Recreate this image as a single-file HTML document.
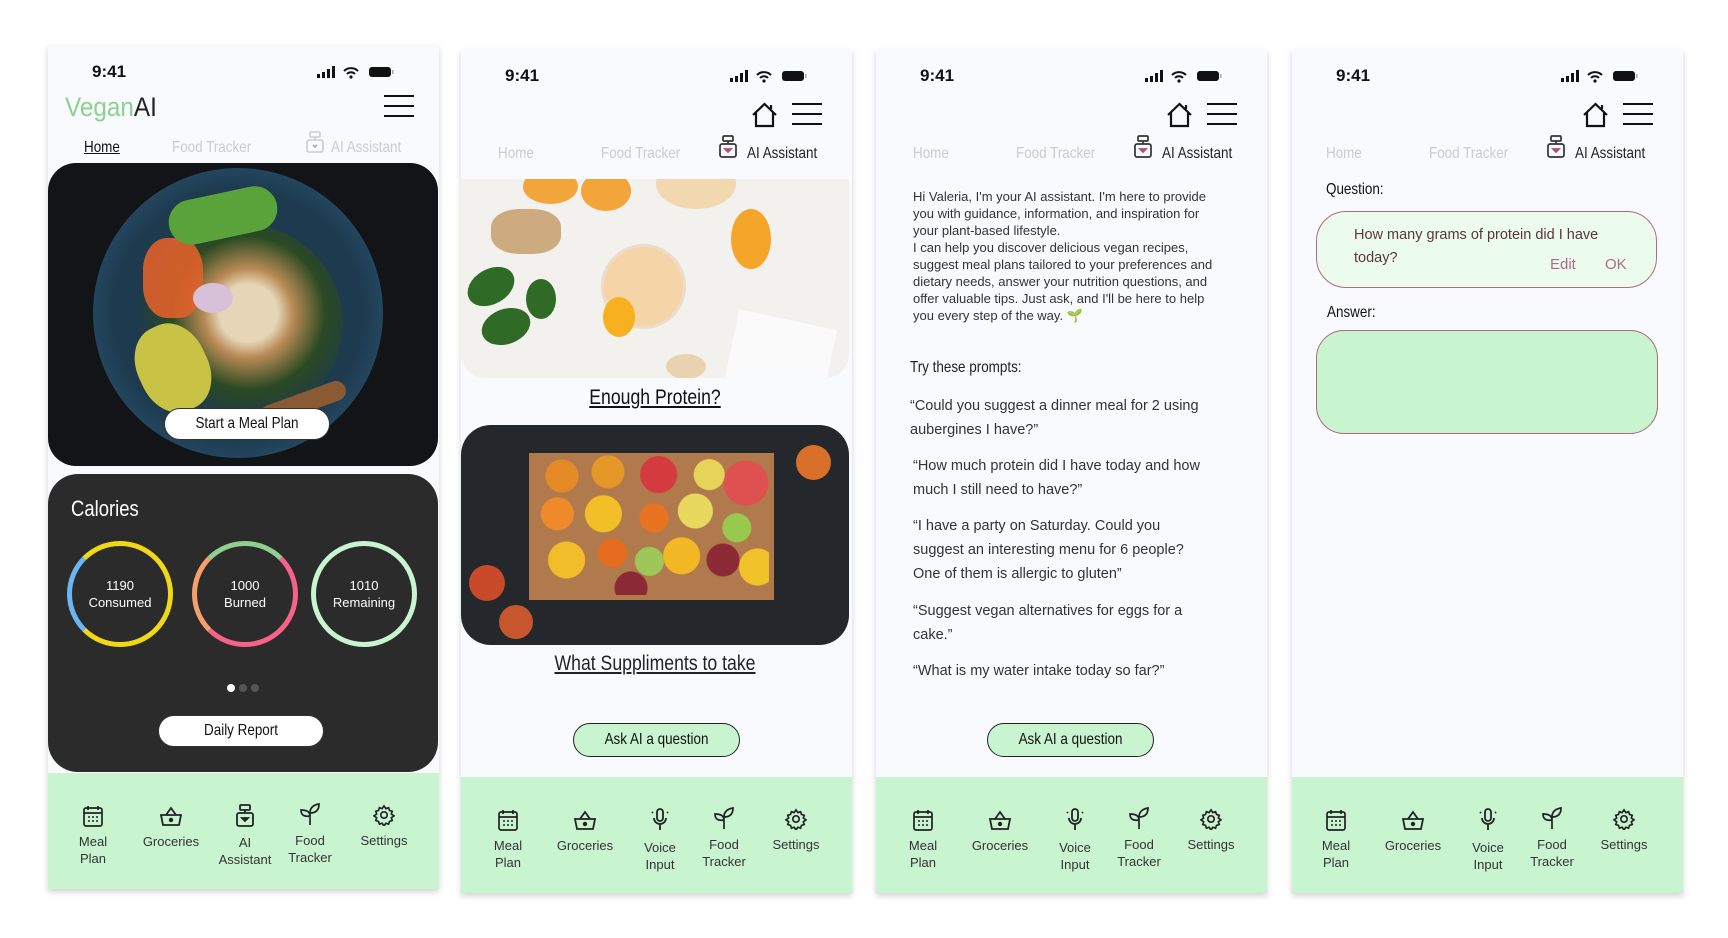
<!DOCTYPE html>
<html><head><meta charset="utf-8">
<style>
*{box-sizing:border-box;margin:0;padding:0}
body{width:1728px;height:938px;background:#fff;position:relative;overflow:hidden;font-family:"Liberation Sans",sans-serif;color:#222}
.ph{position:absolute;width:391px;height:844px;background:#f9fafe;box-shadow:0 3px 6px rgba(0,0,0,.18);overflow:hidden}
.n{display:inline-block;transform:scaleX(.84);transform-origin:left center;white-space:nowrap}
.nc{transform:scaleX(.84);transform-origin:center center;white-space:nowrap}
.abs{position:absolute}
.time{position:absolute;left:44px;top:17px;font-size:17px;font-weight:bold;color:#111}
.stat{position:absolute;left:269px;top:21px}
.tab{position:absolute;top:94px;font-size:16px;color:#ccc;white-space:nowrap}
.nav{position:absolute;left:0;top:728px;width:391px;height:116px;background:#c9f4d0}
.ni{position:absolute;text-align:center;font-size:13px;line-height:17px;color:#333;width:80px;margin-left:-40px}
.ni svg{display:block;margin:0 auto 6px}
.btn{position:absolute;border-radius:18px;text-align:center;font-size:16px;color:#111}
.circ{position:absolute;width:106px;height:106px;border-radius:50%;color:#fff;text-align:center;font-size:13px;line-height:17px;padding-top:31px}
.p3{position:absolute;left:37px;font-size:14.5px;line-height:24px;color:#333;width:290px}
</style></head><body>

<!-- ============ PHONE 1 ============ -->
<div class="ph" style="left:48px;top:45px">
  <div class="time">9:41</div>
  <svg class="stat" width="78" height="14" viewBox="0 0 78 14"><rect x="0" y="8" width="3" height="4" fill="#111"/><rect x="5" y="6" width="3" height="6" fill="#111"/><rect x="10" y="3" width="3" height="9" fill="#111"/><rect x="15" y="0" width="3" height="12" fill="#111"/><path d="M27 5a10 10 0 0 1 14 0M30 8a5.5 5.5 0 0 1 8 0" stroke="#111" stroke-width="2" fill="none"/><circle cx="34" cy="11" r="1.6" fill="#111"/><rect x="52" y="1" width="22" height="10" rx="3" fill="#111"/><rect x="75" y="4" width="1.5" height="4" fill="#aaa"/></svg>
  <div class="abs" style="left:17px;top:47px;font-size:27px;color:#8dd08f"><span class="n" style="transform:scaleX(.9)">Vegan<span style="color:#222">AI</span></span></div>
  <svg class="abs" style="left:336px;top:49px" width="30" height="24"><path d="M0 2h30M0 12h30M0 22h30" stroke="#111" stroke-width="2"/></svg>
  <div class="tab" style="left:36px;color:#111"><span class="n" style="text-decoration:underline">Home</span></div>
  <div class="tab" style="left:124px"><span class="n">Food Tracker</span></div>
  <svg class="abs" style="left:258px;top:86px" width="18" height="22" viewBox="0 0 18 22" fill="none" stroke="#ccc" stroke-width="1.6"><rect x="4" y="1" width="10" height="5" rx="1"/><rect x="1" y="9" width="16" height="12" rx="2"/><path d="M9 6v3"/><path d="M7 14l2 2 2-2" stroke="#aaa"/></svg>
  <div class="tab" style="left:283px"><span class="n">AI Assistant</span></div>

  <div class="abs" style="left:0;top:118px;width:390px;height:303px;border-radius:28px;background:#121417;overflow:hidden">
    <div class="abs" style="left:45px;top:5px;width:290px;height:290px;border-radius:50%;background:radial-gradient(circle,#1d3a4e 60%,#2d5a78 88%,#173042 100%)"></div>
    <div class="abs" style="left:85px;top:60px;width:210px;height:200px;border-radius:50%;background:radial-gradient(circle at 55% 45%,#e6d6b8 0 18%,#b88a55 28%,#2b4a22 48%,transparent 70%)"></div>
    <div class="abs" style="left:95px;top:75px;width:60px;height:80px;border-radius:40%;background:#e0602a;opacity:.9"></div>
    <div class="abs" style="left:120px;top:30px;width:110px;height:45px;border-radius:30px;background:#5aa33a;transform:rotate(-12deg)"></div>
    <div class="abs" style="left:90px;top:160px;width:70px;height:90px;border-radius:45%;background:#c8c245;transform:rotate(-25deg)"></div>
    <div class="abs" style="left:145px;top:120px;width:40px;height:30px;border-radius:50%;background:#d7c1d8"></div>
    <div class="abs" style="left:210px;top:230px;width:90px;height:20px;border-radius:10px;background:#8a5a35;transform:rotate(-20deg)"></div>
    <div class="btn" style="left:116px;top:245px;width:166px;height:32px;background:#fff;border:1px solid #333;line-height:30px"><div class="nc">Start a Meal Plan</div></div>
  </div>

  <div class="abs" style="left:0;top:429px;width:390px;height:298px;border-radius:30px;background:#2b2b2b">
    <div class="abs" style="left:23px;top:22px;font-size:22px;color:#fff"><span class="n">Calories</span></div>
    <div class="circ" style="left:19px;top:67px;border:5px solid #f0d816;border-left-color:#6bb6f2;border-top-color:#f0d816">1190<br>Consumed</div>
    <div class="circ" style="left:144px;top:67px;border:5px solid #f76288;border-left-color:#f5a06a;border-top-color:#90cf90">1000<br>Burned</div>
    <div class="circ" style="left:263px;top:67px;border:5px solid #c9f4d0">1010<br>Remaining</div>
    <div class="abs" style="left:179px;top:210px;width:8px;height:8px;border-radius:50%;background:#fff"></div>
    <div class="abs" style="left:191px;top:210px;width:8px;height:8px;border-radius:50%;background:#555"></div>
    <div class="abs" style="left:203px;top:210px;width:8px;height:8px;border-radius:50%;background:#555"></div>
    <div class="btn" style="left:110px;top:241px;width:166px;height:32px;background:#fff;border:1px solid #333;line-height:30px"><div class="nc">Daily Report</div></div>
  </div>

  <div class="nav">
    <div class="ni" style="left:45px;top:32px"><svg width="20" height="22" viewBox="0 0 20 22" fill="none" stroke="#222" stroke-width="1.7"><rect x="1" y="3" width="18" height="18" rx="2"/><path d="M1 8h18M5 1v4M15 1v4"/><path d="M5 12h2M9 12h2M13 12h2M5 16h2M9 16h2M13 16h2" stroke-width="1.5"/></svg>Meal<br>Plan</div>
    <div class="ni" style="left:123px;top:32px"><svg width="24" height="22" viewBox="0 0 24 22" fill="none" stroke="#222" stroke-width="1.8"><path d="M2 10h20l-2 10H4z"/><path d="M7 10l5-7 5 7"/><circle cx="12" cy="15" r="1.3" fill="#222"/></svg>Groceries</div>
    <div class="ni" style="left:197px;top:31px"><svg width="18" height="24" viewBox="0 0 18 24" fill="none" stroke="#222" stroke-width="1.8"><rect x="4" y="1" width="10" height="5" rx="1"/><rect x="1" y="9" width="16" height="13" rx="2"/><path d="M9 6v3"/><path d="M6 14h6l-3 3z" fill="#222"/></svg>AI<br>Assistant</div>
    <div class="ni" style="left:262px;top:29px"><svg width="24" height="24" viewBox="0 0 24 24" fill="none" stroke="#222" stroke-width="1.7"><path d="M12 23V11M12 11C12 6 15 3 21 2c0 6-3 9-9 9zM12 14C12 10 9 8 3 8c0 5 3 7 9 6z"/></svg>Food<br>Tracker</div>
    <div class="ni" style="left:336px;top:31px"><svg width="22" height="22" viewBox="0 0 24 24" fill="none" stroke="#222" stroke-width="1.8"><circle cx="12" cy="12" r="3.5"/><path d="M12 2l2 3 3-1 1 3 3 1-1 3 3 2-3 2 1 3-3 1-1 3-3-1-2 3-2-3-3 1-1-3-3-1 1-3-3-2 3-2-1-3 3-1 1-3 3 1z"/></svg>Settings</div>
  </div>
</div>

<!-- ============ PHONE 2 ============ -->
<div class="ph" style="left:461px;top:49px">
  <div class="time">9:41</div>
  <svg class="stat" width="78" height="14" viewBox="0 0 78 14"><rect x="0" y="8" width="3" height="4" fill="#111"/><rect x="5" y="6" width="3" height="6" fill="#111"/><rect x="10" y="3" width="3" height="9" fill="#111"/><rect x="15" y="0" width="3" height="12" fill="#111"/><path d="M27 5a10 10 0 0 1 14 0M30 8a5.5 5.5 0 0 1 8 0" stroke="#111" stroke-width="2" fill="none"/><circle cx="34" cy="11" r="1.6" fill="#111"/><rect x="52" y="1" width="22" height="10" rx="3" fill="#111"/><rect x="75" y="4" width="1.5" height="4" fill="#aaa"/></svg>
  <svg class="abs" style="left:290px;top:53px" width="27" height="26" viewBox="0 0 27 26" fill="none" stroke="#111" stroke-width="2.2"><path d="M2 13L13.5 2 25 13M5 10v14h17V10M20 7V3"/></svg>
  <svg class="abs" style="left:331px;top:53px" width="30" height="24"><path d="M0 2h30M0 12h30M0 22h30" stroke="#111" stroke-width="2"/></svg>
  <div class="tab" style="left:37px;top:96px"><span class="n">Home</span></div>
  <div class="tab" style="left:140px;top:96px"><span class="n">Food Tracker</span></div>
  <svg class="abs" style="left:258px;top:86px" width="18" height="24" viewBox="0 0 18 24" fill="none" stroke="#333" stroke-width="1.7"><rect x="4" y="1" width="10" height="5" rx="1"/><rect x="1" y="9" width="16" height="13" rx="2"/><path d="M9 6v3"/><path d="M6 14h6l-3 3z" fill="#b05070" stroke="#b05070"/></svg>
  <div class="tab" style="left:286px;top:96px;color:#222"><span class="n">AI Assistant</span></div>

  <div class="abs" style="left:0;top:130px;width:388px;height:199px;border-radius:0 0 24px 24px;background:#f3f1ee;overflow:hidden">
    <div class="abs" style="left:62px;top:-10px;width:55px;height:35px;border-radius:50%;background:#f2a53a"></div>
    <div class="abs" style="left:120px;top:-8px;width:50px;height:40px;border-radius:50%;background:#f3a43a"></div>
    <div class="abs" style="left:195px;top:-20px;width:80px;height:50px;border-radius:50%;background:#f1d8b0"></div>
    <div class="abs" style="left:140px;top:65px;width:85px;height:85px;border-radius:50%;background:#f5d4a8;border:3px solid #ecdcc9"></div>
    <div class="abs" style="left:142px;top:118px;width:32px;height:40px;border-radius:50%;background:#f6b020"></div>
    <div class="abs" style="left:270px;top:30px;width:40px;height:60px;border-radius:50%;background:#f5a52a"></div>
    <div class="abs" style="left:30px;top:30px;width:70px;height:45px;border-radius:40%;background:#cdaa80"></div>
    <div class="abs" style="left:5px;top:90px;width:50px;height:35px;border-radius:50%;background:#2f6a26;transform:rotate(-30deg)"></div>
    <div class="abs" style="left:20px;top:130px;width:50px;height:35px;border-radius:50%;background:#2f6a26;transform:rotate(-20deg)"></div>
    <div class="abs" style="left:65px;top:100px;width:30px;height:40px;border-radius:50%;background:#2f6a26"></div>
    <div class="abs" style="left:270px;top:140px;width:100px;height:70px;background:#fafafa;transform:rotate(12deg)"></div>
    <div class="abs" style="left:205px;top:175px;width:40px;height:25px;border-radius:50%;background:#e8d2b0"></div>
  </div>
  <div class="abs" style="left:0;top:337px;width:388px;text-align:center;font-size:21px;color:#111"><div class="nc" style="text-decoration:underline">Enough Protein?</div></div>

  <div class="abs" style="left:0;top:376px;width:388px;height:220px;border-radius:30px;background:#24272b;overflow:hidden">
    <div class="abs" style="left:68px;top:28px;width:245px;height:147px;background:#b07a4c"></div>
    <div class="abs" style="left:78px;top:30px;width:230px;height:140px;background:
      radial-gradient(circle at 10% 15%,#e48a26 0 16px,transparent 17px),
      radial-gradient(circle at 30% 12%,#e59828 0 16px,transparent 17px),
      radial-gradient(circle at 52% 14%,#d53a3e 0 18px,transparent 19px),
      radial-gradient(circle at 74% 14%,#e6d35a 0 15px,transparent 16px),
      radial-gradient(circle at 90% 20%,#df5050 0 22px,transparent 23px),
      radial-gradient(circle at 8% 42%,#ef8a2a 0 16px,transparent 17px),
      radial-gradient(circle at 28% 42%,#f2bf28 0 18px,transparent 19px),
      radial-gradient(circle at 50% 45%,#e87422 0 14px,transparent 15px),
      radial-gradient(circle at 68% 40%,#e9d85e 0 17px,transparent 18px),
      radial-gradient(circle at 86% 52%,#98c94e 0 14px,transparent 15px),
      radial-gradient(circle at 12% 75%,#f2bd2a 0 18px,transparent 19px),
      radial-gradient(circle at 32% 70%,#e66d20 0 14px,transparent 15px),
      radial-gradient(circle at 48% 76%,#9fc658 0 14px,transparent 15px),
      radial-gradient(circle at 62% 72%,#f2b826 0 18px,transparent 19px),
      radial-gradient(circle at 80% 75%,#8b2a35 0 16px,transparent 17px),
      radial-gradient(circle at 95% 80%,#f2c22a 0 18px,transparent 19px),
      radial-gradient(circle at 40% 95%,#8b2a35 0 16px,transparent 17px)"></div>
    <div class="abs" style="left:8px;top:140px;width:36px;height:36px;border-radius:50%;background:#c84a2a"></div>
    <div class="abs" style="left:38px;top:180px;width:34px;height:34px;border-radius:50%;background:#c8562c"></div>
    <div class="abs" style="left:335px;top:20px;width:35px;height:35px;border-radius:50%;background:#d8702a"></div>
  </div>
  <div class="abs" style="left:0;top:603px;width:388px;text-align:center;font-size:21px;color:#222"><div class="nc" style="text-decoration:underline">What Suppliments to take</div></div>
  <div class="btn" style="left:112px;top:674px;width:167px;height:34px;background:#c9f4d0;border:1.5px solid #222;line-height:31px"><div class="nc">Ask AI a question</div></div>

  <div class="nav">
    <div class="ni" style="left:47px;top:32px"><svg width="20" height="22" viewBox="0 0 20 22" fill="none" stroke="#222" stroke-width="1.7"><rect x="1" y="3" width="18" height="18" rx="2"/><path d="M1 8h18M5 1v4M15 1v4"/><path d="M5 12h2M9 12h2M13 12h2M5 16h2M9 16h2M13 16h2" stroke-width="1.5"/></svg>Meal<br>Plan</div>
    <div class="ni" style="left:124px;top:32px"><svg width="24" height="22" viewBox="0 0 24 22" fill="none" stroke="#222" stroke-width="1.8"><path d="M2 10h20l-2 10H4z"/><path d="M7 10l5-7 5 7"/><circle cx="12" cy="15" r="1.3" fill="#222"/></svg>Groceries</div>
    <div class="ni" style="left:199px;top:30px"><svg width="22" height="26" viewBox="0 0 22 26" fill="none" stroke="#222" stroke-width="1.8"><rect x="8" y="2" width="6" height="12" rx="3"/><path d="M5 11a6 6 0 0 0 12 0M11 17v6M3 5l1 1M19 5l-1 1"/></svg>Voice<br>Input</div>
    <div class="ni" style="left:263px;top:29px"><svg width="24" height="24" viewBox="0 0 24 24" fill="none" stroke="#222" stroke-width="1.7"><path d="M12 23V11M12 11C12 6 15 3 21 2c0 6-3 9-9 9zM12 14C12 10 9 8 3 8c0 5 3 7 9 6z"/></svg>Food<br>Tracker</div>
    <div class="ni" style="left:335px;top:31px"><svg width="22" height="22" viewBox="0 0 24 24" fill="none" stroke="#222" stroke-width="1.8"><circle cx="12" cy="12" r="3.5"/><path d="M12 2l2 3 3-1 1 3 3 1-1 3 3 2-3 2 1 3-3 1-1 3-3-1-2 3-2-3-3 1-1-3-3-1 1-3-3-2 3-2-1-3 3-1 1-3 3 1z"/></svg>Settings</div>
  </div>
</div>

<!-- ============ PHONE 3 ============ -->
<div class="ph" style="left:876px;top:49px">
  <div class="time">9:41</div>
  <svg class="stat" width="78" height="14" viewBox="0 0 78 14"><rect x="0" y="8" width="3" height="4" fill="#111"/><rect x="5" y="6" width="3" height="6" fill="#111"/><rect x="10" y="3" width="3" height="9" fill="#111"/><rect x="15" y="0" width="3" height="12" fill="#111"/><path d="M27 5a10 10 0 0 1 14 0M30 8a5.5 5.5 0 0 1 8 0" stroke="#111" stroke-width="2" fill="none"/><circle cx="34" cy="11" r="1.6" fill="#111"/><rect x="52" y="1" width="22" height="10" rx="3" fill="#111"/><rect x="75" y="4" width="1.5" height="4" fill="#aaa"/></svg>
  <svg class="abs" style="left:290px;top:53px" width="27" height="26" viewBox="0 0 27 26" fill="none" stroke="#111" stroke-width="2.2"><path d="M2 13L13.5 2 25 13M5 10v14h17V10M20 7V3"/></svg>
  <svg class="abs" style="left:331px;top:53px" width="30" height="24"><path d="M0 2h30M0 12h30M0 22h30" stroke="#111" stroke-width="2"/></svg>
  <div class="tab" style="left:37px;top:96px"><span class="n">Home</span></div>
  <div class="tab" style="left:140px;top:96px"><span class="n">Food Tracker</span></div>
  <svg class="abs" style="left:258px;top:86px" width="18" height="24" viewBox="0 0 18 24" fill="none" stroke="#333" stroke-width="1.7"><rect x="4" y="1" width="10" height="5" rx="1"/><rect x="1" y="9" width="16" height="13" rx="2"/><path d="M9 6v3"/><path d="M6 14h6l-3 3z" fill="#b05070" stroke="#b05070"/></svg>
  <div class="tab" style="left:286px;top:96px;color:#222"><span class="n">AI Assistant</span></div>

  <div class="abs" style="left:37px;top:139px;width:300px;font-size:13px;line-height:17px;color:#333">Hi Valeria, I'm your AI assistant. I'm here to provide you with guidance, information, and inspiration for your plant-based lifestyle.<br>I can help you discover delicious vegan recipes, suggest meal plans tailored to your preferences and dietary needs, answer your nutrition questions, and offer valuable tips. Just ask, and I'll be here to help you every step of the way. <span style="color:#5cb85c">🌱</span></div>
  <div class="abs" style="left:34px;top:310px;font-size:16px;color:#222"><span class="n">Try these prompts:</span></div>
  <div class="p3" style="left:34px;top:345px">“Could you suggest a dinner meal for 2 using aubergines I have?”</div>
  <div class="p3" style="top:405px">“How much protein did I have today and how much I still need to have?”</div>
  <div class="p3" style="top:465px">“I have a party on Saturday. Could you suggest an interesting menu for 6 people? One of them is allergic to gluten”</div>
  <div class="p3" style="top:550px">“Suggest vegan alternatives for eggs for a cake.”</div>
  <div class="p3" style="top:610px">“What is my water intake today so far?”</div>
  <div class="btn" style="left:111px;top:674px;width:167px;height:34px;background:#c9f4d0;border:1.5px solid #222;line-height:31px"><div class="nc">Ask AI a question</div></div>

  <div class="nav">
    <div class="ni" style="left:47px;top:32px"><svg width="20" height="22" viewBox="0 0 20 22" fill="none" stroke="#222" stroke-width="1.7"><rect x="1" y="3" width="18" height="18" rx="2"/><path d="M1 8h18M5 1v4M15 1v4"/><path d="M5 12h2M9 12h2M13 12h2M5 16h2M9 16h2M13 16h2" stroke-width="1.5"/></svg>Meal<br>Plan</div>
    <div class="ni" style="left:124px;top:32px"><svg width="24" height="22" viewBox="0 0 24 22" fill="none" stroke="#222" stroke-width="1.8"><path d="M2 10h20l-2 10H4z"/><path d="M7 10l5-7 5 7"/><circle cx="12" cy="15" r="1.3" fill="#222"/></svg>Groceries</div>
    <div class="ni" style="left:199px;top:30px"><svg width="22" height="26" viewBox="0 0 22 26" fill="none" stroke="#222" stroke-width="1.8"><rect x="8" y="2" width="6" height="12" rx="3"/><path d="M5 11a6 6 0 0 0 12 0M11 17v6M3 5l1 1M19 5l-1 1"/></svg>Voice<br>Input</div>
    <div class="ni" style="left:263px;top:29px"><svg width="24" height="24" viewBox="0 0 24 24" fill="none" stroke="#222" stroke-width="1.7"><path d="M12 23V11M12 11C12 6 15 3 21 2c0 6-3 9-9 9zM12 14C12 10 9 8 3 8c0 5 3 7 9 6z"/></svg>Food<br>Tracker</div>
    <div class="ni" style="left:335px;top:31px"><svg width="22" height="22" viewBox="0 0 24 24" fill="none" stroke="#222" stroke-width="1.8"><circle cx="12" cy="12" r="3.5"/><path d="M12 2l2 3 3-1 1 3 3 1-1 3 3 2-3 2 1 3-3 1-1 3-3-1-2 3-2-3-3 1-1-3-3-1 1-3-3-2 3-2-1-3 3-1 1-3 3 1z"/></svg>Settings</div>
  </div>
</div>

<!-- ============ PHONE 4 ============ -->
<div class="ph" style="left:1292px;top:49px">
  <div class="time">9:41</div>
  <svg class="stat" width="78" height="14" viewBox="0 0 78 14"><rect x="0" y="8" width="3" height="4" fill="#111"/><rect x="5" y="6" width="3" height="6" fill="#111"/><rect x="10" y="3" width="3" height="9" fill="#111"/><rect x="15" y="0" width="3" height="12" fill="#111"/><path d="M27 5a10 10 0 0 1 14 0M30 8a5.5 5.5 0 0 1 8 0" stroke="#111" stroke-width="2" fill="none"/><circle cx="34" cy="11" r="1.6" fill="#111"/><rect x="52" y="1" width="22" height="10" rx="3" fill="#111"/><rect x="75" y="4" width="1.5" height="4" fill="#aaa"/></svg>
  <svg class="abs" style="left:290px;top:53px" width="27" height="26" viewBox="0 0 27 26" fill="none" stroke="#111" stroke-width="2.2"><path d="M2 13L13.5 2 25 13M5 10v14h17V10M20 7V3"/></svg>
  <svg class="abs" style="left:331px;top:53px" width="30" height="24"><path d="M0 2h30M0 12h30M0 22h30" stroke="#111" stroke-width="2"/></svg>
  <div class="tab" style="left:34px;top:96px"><span class="n">Home</span></div>
  <div class="tab" style="left:137px;top:96px"><span class="n">Food Tracker</span></div>
  <svg class="abs" style="left:255px;top:86px" width="18" height="24" viewBox="0 0 18 24" fill="none" stroke="#333" stroke-width="1.7"><rect x="4" y="1" width="10" height="5" rx="1"/><rect x="1" y="9" width="16" height="13" rx="2"/><path d="M9 6v3"/><path d="M6 14h6l-3 3z" fill="#b05070" stroke="#b05070"/></svg>
  <div class="tab" style="left:283px;top:96px;color:#222"><span class="n">AI Assistant</span></div>

  <div class="abs" style="left:34px;top:132px;font-size:16px;color:#111"><span class="n">Question:</span></div>
  <div class="abs" style="left:24px;top:162px;width:341px;height:77px;border-radius:30px;background:#ebfcee;border:1.3px solid #b06a7a">
    <div class="abs" style="left:37px;top:12px;font-size:14.5px;line-height:23px;color:#5a3540;width:275px">How many grams of protein did I have today?</div>
    <div class="abs" style="left:233px;top:44px;font-size:15px;color:#b06a88">Edit</div>
    <div class="abs" style="left:288px;top:44px;font-size:15px;color:#b06a88">OK</div>
  </div>
  <div class="abs" style="left:35px;top:255px;font-size:16px;color:#111"><span class="n">Answer:</span></div>
  <div class="abs" style="left:24px;top:281px;width:342px;height:104px;border-radius:28px;background:#c9f4d0;border:1.3px solid #b06a7a"></div>

  <div class="nav">
    <div class="ni" style="left:44px;top:32px"><svg width="20" height="22" viewBox="0 0 20 22" fill="none" stroke="#222" stroke-width="1.7"><rect x="1" y="3" width="18" height="18" rx="2"/><path d="M1 8h18M5 1v4M15 1v4"/><path d="M5 12h2M9 12h2M13 12h2M5 16h2M9 16h2M13 16h2" stroke-width="1.5"/></svg>Meal<br>Plan</div>
    <div class="ni" style="left:121px;top:32px"><svg width="24" height="22" viewBox="0 0 24 22" fill="none" stroke="#222" stroke-width="1.8"><path d="M2 10h20l-2 10H4z"/><path d="M7 10l5-7 5 7"/><circle cx="12" cy="15" r="1.3" fill="#222"/></svg>Groceries</div>
    <div class="ni" style="left:196px;top:30px"><svg width="22" height="26" viewBox="0 0 22 26" fill="none" stroke="#222" stroke-width="1.8"><rect x="8" y="2" width="6" height="12" rx="3"/><path d="M5 11a6 6 0 0 0 12 0M11 17v6M3 5l1 1M19 5l-1 1"/></svg>Voice<br>Input</div>
    <div class="ni" style="left:260px;top:29px"><svg width="24" height="24" viewBox="0 0 24 24" fill="none" stroke="#222" stroke-width="1.7"><path d="M12 23V11M12 11C12 6 15 3 21 2c0 6-3 9-9 9zM12 14C12 10 9 8 3 8c0 5 3 7 9 6z"/></svg>Food<br>Tracker</div>
    <div class="ni" style="left:332px;top:31px"><svg width="22" height="22" viewBox="0 0 24 24" fill="none" stroke="#222" stroke-width="1.8"><circle cx="12" cy="12" r="3.5"/><path d="M12 2l2 3 3-1 1 3 3 1-1 3 3 2-3 2 1 3-3 1-1 3-3-1-2 3-2-3-3 1-1-3-3-1 1-3-3-2 3-2-1-3 3-1 1-3 3 1z"/></svg>Settings</div>
  </div>
</div>
</body></html>
